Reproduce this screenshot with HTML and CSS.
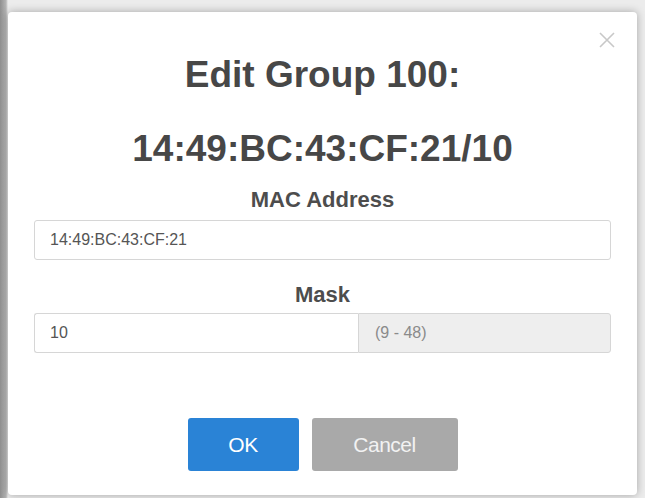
FILE: index.html
```html
<!DOCTYPE html>
<html lang="en">
<head>
  <meta charset="UTF-8">
  <title>Edit Group</title>
  <link rel="stylesheet" href="styles.css">
</head>
<body>
  <div class="modal">
    <button class="close" aria-label="Close">
      <svg width="16" height="16" viewBox="0 0 16 16">
        <path d="M1 1 L15 15 M15 1 L1 15" stroke="#c8c8c8" stroke-width="1.6" fill="none"/>
      </svg>
    </button>
    <h2 class="title">Edit Group 100:</h2>
    <h2 class="title subtitle">14:49:BC:43:CF:21/10</h2>

    <label class="field-label" for="mac">MAC Address</label>
    <input class="field" id="mac" type="text" value="14:49:BC:43:CF:21">

    <label class="field-label mask-label" for="mask">Mask</label>
    <div class="input-group">
      <input class="field" id="mask" type="text" value="10">
      <span class="addon">(9 - 48)</span>
    </div>

    <div class="actions">
      <button class="btn btn-ok">OK</button>
      <button class="btn btn-cancel">Cancel</button>
    </div>
  </div>
</body>
</html>
```

FILE: styles.css
```css
:root {
  --text: #474747;
  --border: #d6d6d6;
  --blue: #2a83d6;
  --grey-btn: #a9a9a9;
}
html, body {
  height: 100%;
}
body {
  margin: 0;
  padding: 12px 8px 3px 8px;
  box-sizing: border-box;
  font-family: 'Liberation Sans', Arial, sans-serif;
  background: linear-gradient(to right, #8f8f8f 0, #b5b5b5 6px, #ececec 8px, #ececec 100%);
}
.modal {
  position: relative;
  box-sizing: border-box;
  width: 629px;
  height: 483px;
  padding: 42px 26px 24px 26px;
  background: #fff;
  border-radius: 4px;
  box-shadow: 0 0 8px rgba(0,0,0,0.3);
  display: flex;
  flex-direction: column;
}
.close {
  position: absolute;
  top: 20px;
  right: 22px;
  padding: 0;
  border: none;
  background: none;
  line-height: 0;
}
.title {
  margin: 0;
  text-align: center;
  font-size: 37px;
  line-height: 42px;
  font-weight: 700;
  color: var(--text);
}
.subtitle {
  margin-top: 32px;
}
.field-label {
  display: block;
  margin-top: 17px;
  text-align: center;
  font-size: 22px;
  line-height: 26px;
  font-weight: 700;
  color: #4d4d4d;
}
.mask-label {
  margin-top: 22px;
}
.field {
  box-sizing: border-box;
  width: 100%;
  height: 40px;
  margin-top: 7px;
  padding: 0 15px;
  border: 1px solid var(--border);
  border-radius: 3px;
  font-family: inherit;
  font-size: 16px;
  color: #555;
  background: #fff;
  outline: none;
}
.input-group {
  display: flex;
  margin-top: 5px;
}
.input-group .field {
  margin-top: 0;
  width: 324px;
  border-radius: 3px 0 0 3px;
  border-right: none;
}
.addon {
  flex: 1;
  display: flex;
  align-items: center;
  padding: 0 16px;
  height: 40px;
  box-sizing: border-box;
  background: #eeeeee;
  border: 1px solid var(--border);
  border-radius: 0 3px 3px 0;
  font-size: 16px;
  color: #8a8a8a;
}
.actions {
  margin-top: auto;
  display: flex;
  justify-content: center;
  gap: 13px;
}
.btn {
  height: 53px;
  border: none;
  border-radius: 3px;
  font-family: inherit;
  font-size: 21px;
  color: #fff;
  letter-spacing: -0.5px;
}
.btn-ok {
  width: 111px;
  background: var(--blue);
}
.btn-cancel {
  width: 146px;
  background: var(--grey-btn);
  color: #f2f2f2;
}
```
